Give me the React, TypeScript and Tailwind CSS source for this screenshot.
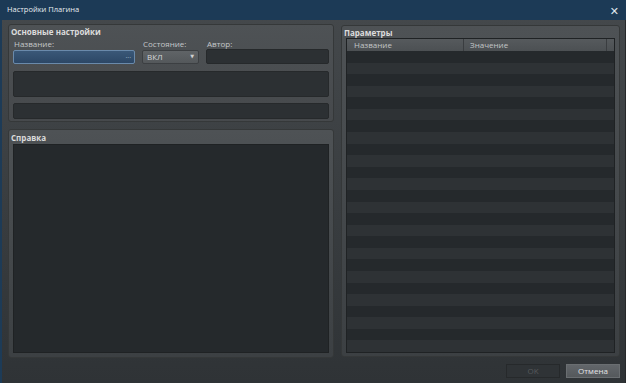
import React from "react";

const font = { fontFamily: '"Open Sans", "DejaVu Sans", sans-serif' };

const GroupTitle = ({ children, h = "h-[12px]" }: { children: React.ReactNode; h?: string }) => (
  <div className={`${h} -ml-[2px] pt-[1px] text-[8px] font-bold leading-[11px] text-[#dcdcdc]`}>{children}</div>
);

const App = () => {
  const rows = Array.from({ length: 26 }, (_, i) => i);
  return (
    <div className="w-[628px] h-[385px] bg-white" style={font}>
      <div className="w-[626px] h-[383px] flex flex-col border-l-2 border-[#1d3b57] bg-gradient-to-b from-[#45494c] to-[#2f3336]">
        {/* title bar */}
        <div className="h-[20px] -ml-[2px] flex items-center justify-between bg-[#1c3a56] pl-[7px] pr-[7px] text-[7.5px] text-[#e8ecf0]">
          <span>Настройки Плагина</span>
          <span className="text-[11px] leading-none text-[#dfe6ee]">✕</span>
        </div>

        <div className="flex-1 flex flex-col pl-[6px] pr-[5px] pt-[4px] border-r border-[#27292b]">
          <div className="flex h-[334px] gap-[7px]">
            {/* left column */}
            <div className="w-[326px] flex flex-col gap-[7px]">
              <div className="h-[98px] rounded-[3px] border border-[#353839] bg-gradient-to-b from-[#4e5255] to-[#46494c] px-[4px]">
                <GroupTitle>Основные настройки</GroupTitle>
                <div className="flex gap-[7px] text-[8px] text-[#c4c7c9]">
                  <div className="w-[122px]">
                    <div className="h-[13px] pl-[1px] pt-[1px] leading-[12px]">Название:</div>
                    <div className="h-[14px] rounded-[2px] border border-[#6a8aab] bg-gradient-to-b from-[#3a5878] to-[#2c4766] flex items-center justify-end pr-[3px] text-[7px] leading-none text-[#b8c6d4]">···</div>
                  </div>
                  <div className="w-[57px]">
                    <div className="h-[13px] pl-[1px] pt-[1px] leading-[12px]">Состояние:</div>
                    <div className="h-[14px] rounded-[2px] border border-[#3c3f42] bg-gradient-to-b from-[#606467] to-[#54585b] flex items-center justify-between px-[4px] text-[8px] text-[#d6d8da]">
                      <span>ВКЛ</span>
                      <span className="text-[5px] text-[#d0d0d0]">▼</span>
                    </div>
                  </div>
                  <div className="w-[123px]">
                    <div className="h-[13px] pl-[1px] pt-[1px] leading-[12px]">Автор:</div>
                    <div className="h-[15px] -mt-[1px] rounded-[2px] border border-[#26292b] bg-[#2c3033]" />
                  </div>
                </div>
                <div className="mt-[7px] h-[26px] rounded-[2px] border border-[#26292b] bg-[#2c3033]" />
                <div className="mt-[6px] h-[16px] rounded-[2px] border border-[#26292b] bg-[#2c3033]" />
              </div>

              <div className="flex-1 flex flex-col rounded-[3px] border border-[#353839] bg-gradient-to-b from-[#4e5255] to-[#3c4043] px-[4px] pt-[1px] pb-[4px]">
                <GroupTitle h="h-[13px]">Справка</GroupTitle>
                <div className="flex-1 border border-[#1f2224] bg-[#25292c]" />
              </div>
            </div>

            {/* right column */}
            <div className="w-[280px] mt-[1px] mb-[1px] flex flex-col rounded-[3px] border border-[#353839] bg-gradient-to-b from-[#4e5255] to-[#3c4043] px-[4px] pb-[3px]">
              <GroupTitle>Параметры</GroupTitle>
              <div className="flex-1 flex flex-col border border-[#1f2224] bg-[#25292c]">
                <div className="h-[12px] flex bg-gradient-to-b from-[#565a5d] to-[#4c5053] text-[8px] leading-[12px] text-[#c2c5c7]">
                  <div className="w-[117px] border-r border-[#3a3d40] pl-[7px]">Название</div>
                  <div className="w-[143px] border-r border-[#3a3d40] pl-[6px]">Значение</div>
                  <div className="flex-1" />
                </div>
                <div className="flex-1 flex flex-col">
                  {rows.map((i) => (
                    <div key={i} className={i % 2 === 0 ? "flex-1 bg-[#25292c]" : "flex-1 bg-[#2e3235]"} />
                  ))}
                </div>
              </div>
            </div>
          </div>

          <div className="mt-[6px] flex justify-end gap-[6px]">
            <div className="w-[54px] h-[14px] flex items-center justify-center border border-[#26292b] bg-[#2f3336] text-[8px] text-[#56595c]">OK</div>
            <div className="w-[54px] h-[14px] flex items-center justify-center border border-[#6a6e71] bg-gradient-to-b from-[#62666a] to-[#55595c] text-[8px] text-[#e2e4e6]">Отмена</div>
          </div>
        </div>
      </div>
    </div>
  );
};

export default App;
